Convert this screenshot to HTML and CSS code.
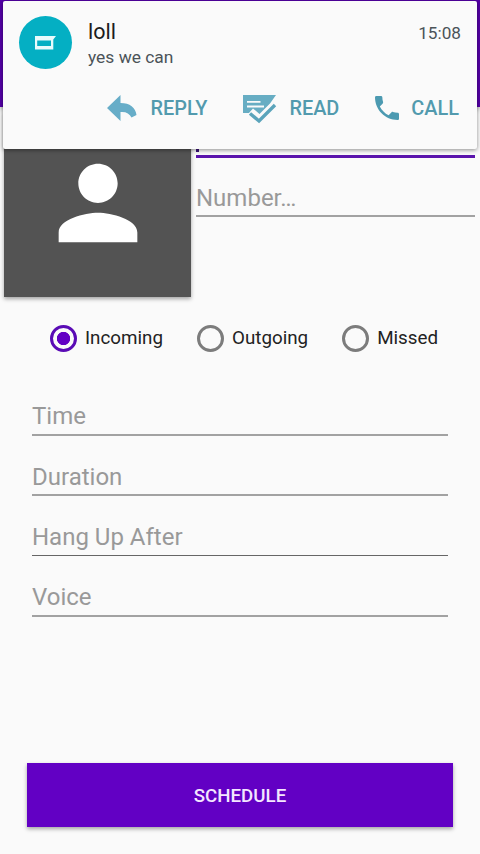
FILE: index.html
```html
<!DOCTYPE html>
<html lang="en">
<head>
    <meta charset="UTF-8">
    <meta name="viewport" content="width=device-width, initial-scale=1.0">
    <title>Schedule call</title>
    <link rel="stylesheet" href="styles.css">
</head>
<body>
    <header class="app-bar"></header>

    <form class="call-form">
        <div class="contact">
            <div class="photo">
                <svg viewBox="0 0 24 24"><path d="M12 12c2.21 0 4-1.79 4-4s-1.79-4-4-4-4 1.79-4 4 1.79 4 4 4zm0 2c-2.67 0-8 1.34-8 4v2h16v-2c0-2.66-5.33-4-8-4z"/></svg>
            </div>
            <div class="contact-fields">
                <div class="field name focused"><span class="cursor"></span></div>
                <div class="field number">Number…</div>
            </div>
        </div>

        <div class="call-type">
            <label class="radio"><input type="radio" name="type" checked><span>Incoming</span></label>
            <label class="radio"><input type="radio" name="type"><span>Outgoing</span></label>
            <label class="radio"><input type="radio" name="type"><span>Missed</span></label>
        </div>

        <div class="details">
            <div class="field">Time</div>
            <div class="field">Duration</div>
            <div class="field thin">Hang Up After</div>
            <div class="field">Voice</div>
        </div>

        <button type="button" class="schedule">SCHEDULE</button>
    </form>

    <!-- heads-up notification, lies over the form -->
    <div class="notification">
        <div class="message">
            <div class="avatar">
                <svg viewBox="0 0 21 14"><path fill-rule="evenodd" d="M0 0H21L18.3 3.5V13.5H0ZM2.2 4.5V10H16V4.5Z"/></svg>
            </div>
            <div class="message-text">
                <div class="sender">loll</div>
                <div class="body">yes we can</div>
            </div>
            <div class="time">15:08</div>
        </div>
        <div class="actions">
            <div class="action reply">
                <svg viewBox="0 0 30 26"><path d="M0 13 13.5 0V8C23 8 28.5 12.5 29.5 20L24.5 22.5C22.5 18.5 19 16.5 13.5 17V26Z"/></svg>
                <span>REPLY</span>
            </div>
            <div class="action read">
                <svg viewBox="0 0 34 29">
                    <path d="M0 0H33L27 8.5 16.5 19 10 13.5 6 18H0Z"/>
                    <path class="cut" d="M4 6.8H17.5M4 11.5H21"/>
                    <path class="cut wide" d="M7 17.5 16 25.5 32 9.5"/>
                    <path class="tick" d="M7 18.5 16 26 32 10"/>
                </svg>
                <span>READ</span>
            </div>
            <div class="action call">
                <svg viewBox="3 3 18 18"><path d="M6.62 10.79c1.44 2.83 3.76 5.14 6.59 6.59l2.2-2.2c.27-.27.67-.36 1.02-.24 1.12.37 2.33.57 3.57.57.55 0 1 .45 1 1V20c0 .55-.45 1-1 1-9.39 0-17-7.61-17-17 0-.55.45-1 1-1h3.5c.55 0 1 .45 1 1 0 1.25.2 2.45.57 3.57.11.35.03.74-.25 1.02l-2.2 2.2z"/></svg>
                <span>CALL</span>
            </div>
        </div>
    </div>
</body>
</html>
```
FILE: styles.css
```css
* {
    box-sizing: border-box;
}

body {
    position: relative;
    display: flex;
    flex-direction: column;
    height: 854px;
    margin: 0;
    overflow: hidden;
    background-color: #fafafa;
    color: #222;
    font-family: Roboto, sans-serif;
}

svg {
    display: block;
    flex: none;
}

.app-bar {
    height: 107px;
    flex: none;
    background-color: #5400a8;
    box-shadow: 0 2px 5px rgba(0, 0, 0, 0.3);
}

.call-form {
    flex: 1;
    display: flex;
    flex-direction: column;
    padding-bottom: 27px;
}

.contact {
    display: flex;
    gap: 5px;
    padding: 4px 5px 0 4px;
}

.photo {
    display: flex;
    justify-content: center;
    align-items: center;
    width: 187px;
    height: 186px;
    padding-bottom: 3px;
    background-color: #535353;
    box-shadow: 0 2px 4px rgba(0, 0, 0, 0.35);
}

.photo svg {
    width: 118px;
    height: 118px;
    fill: #fff;
}

.contact-fields {
    flex: 1;
}

.field {
    height: 60.3px;
    padding-top: 27px;
    border-bottom: 2px solid #a2a2a2;
    color: #999;
    font-size: 24px;
    line-height: 28px;
}

.field.thin {
    border-bottom: 1px solid #666;
}

.field.name {
    height: 47px;
    padding-top: 17px;
}

.field.number {
    height: 59px;
    padding-top: 26px;
}

.field.focused {
    border-bottom: 3px solid #5a14ac;
}

.cursor {
    display: block;
    width: 3px;
    height: 24px;
    background-color: #3b1479;
}

.call-type {
    display: flex;
    gap: 34px;
    margin: 27px 0 0 50px;
}

.radio {
    display: flex;
    align-items: center;
    gap: 8px;
    font-size: 18.8px;
    line-height: 27px;
}

.radio span {
    padding-top: 1px;
}

.radio input {
    appearance: none;
    width: 27px;
    height: 27px;
    margin: 0;
    border: 3px solid #7c7c7c;
    border-radius: 50%;
}

.radio input:checked {
    border-color: #5a0bb5;
    background: radial-gradient(circle, #6200c4 6.3px, transparent 7px);
}

.details {
    margin: 23.4px 32px 0;
}

.schedule {
    height: 64px;
    margin: auto 27px 0;
    padding-top: 2px;
    border: none;
    background-color: #6200c4;
    box-shadow: 0 2px 4px rgba(0, 0, 0, 0.35);
    color: #f4e6ff;
    font: 500 18.7px Roboto, sans-serif;
}

.notification {
    position: absolute;
    top: 1px;
    left: 3px;
    width: 474px;
    height: 148px;
    border-radius: 2px;
    background-color: #fafafa;
    box-shadow: 0 1px 4px rgba(0, 0, 0, 0.45);
}

.message {
    display: flex;
    height: 68px;
    padding: 15px 16px 0;
}

.avatar {
    display: flex;
    justify-content: center;
    align-items: center;
    width: 53px;
    height: 53px;
    border-radius: 50%;
    background-color: #04afc3;
}

.avatar svg {
    width: 21px;
    height: 14px;
    fill: #e8fbfc;
}

.message-text {
    flex: 1;
    margin-left: 16px;
}

.sender {
    margin-top: 3px;
    color: #1c1c1c;
    font-size: 21.5px;
    line-height: 26px;
}

.body {
    color: #4b5358;
    font-size: 17.4px;
    line-height: 25px;
}

.time {
    margin-top: 7px;
    color: #4b5358;
    font-size: 17.2px;
    line-height: 20px;
}

.actions {
    display: flex;
    justify-content: flex-end;
    gap: 36px;
    height: 30px;
    margin: 24px 18px 0 0;
}

.action {
    display: flex;
    align-items: center;
    color: #529aae;
    font-size: 19.9px;
    font-weight: 500;
}

.reply svg {
    width: 30px;
    height: 26px;
    margin-right: 14px;
    fill: #67adc8;
}

.read svg {
    width: 34px;
    height: 29px;
    margin: 2px 12px 0 0;
    fill: #67adc3;
}

.call svg {
    width: 24px;
    height: 24px;
    margin-right: 12px;
    fill: #4c9ab1;
}

.cut {
    fill: none;
    stroke: #fafafa;
    stroke-width: 1.8;
}

.cut.wide {
    stroke-width: 7;
}

.tick {
    fill: none;
    stroke: #5ba4bb;
    stroke-width: 3.4;
}
```
